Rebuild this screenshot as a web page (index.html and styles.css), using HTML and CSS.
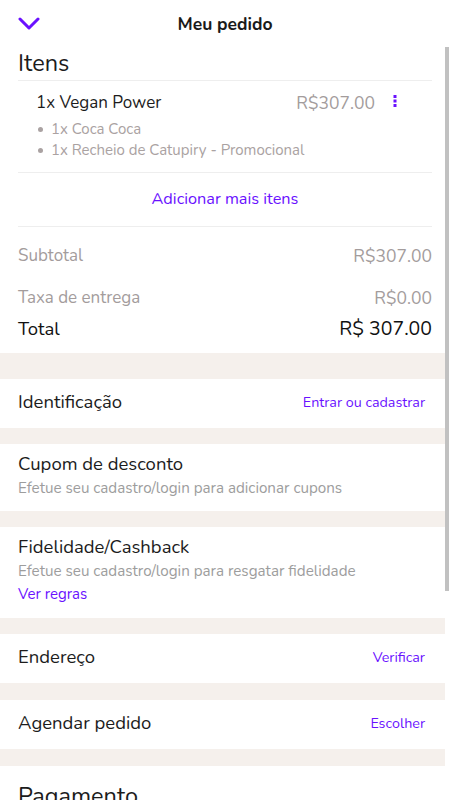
FILE: index.html
```html
<!DOCTYPE html>
<html lang="pt-BR">
<head>
    <meta charset="UTF-8">
    <meta name="viewport" content="width=device-width, initial-scale=1.0">
    <title>Meu pedido</title>
    <link rel="stylesheet" href="styles.css">
</head>
<body>
    <header class="topbar">
        <button class="back" aria-label="Fechar">
            <svg width="22" height="14" viewBox="0 0 22 14">
                <path d="M2 2 L11 11 L20 2" fill="none" stroke="#6a11ff" stroke-width="3" stroke-linecap="round" stroke-linejoin="round"/>
            </svg>
        </button>
        <h1>Meu pedido</h1>
        <span></span>
    </header>

    <div class="viewport">
        <main class="content">
            <section class="items">
                <h2 class="items-title">Itens</h2>
                <div class="item">
                    <div class="item-head">
                        <span class="item-name">1x Vegan Power</span>
                        <span class="item-price">R$307.00</span>
                        <button class="more" aria-label="Opções">
                            <svg width="4" height="12" viewBox="0 0 4 12">
                                <rect x="0.5" y="0" width="3" height="3" fill="#6a11ff"/>
                                <rect x="0.5" y="4.5" width="3" height="3" fill="#6a11ff"/>
                                <rect x="0.5" y="9" width="3" height="3" fill="#6a11ff"/>
                            </svg>
                        </button>
                    </div>
                    <ul class="extras">
                        <li>1x Coca Coca</li>
                        <li>1x Recheio de Catupiry - Promocional</li>
                    </ul>
                </div>
                <a class="add-more" href="#">Adicionar mais itens</a>
                <div class="totals">
                    <div class="total-row sub"><span>Subtotal</span><span>R$307.00</span></div>
                    <div class="total-row fee"><span>Taxa de entrega</span><span>R$0.00</span></div>
                    <div class="total-row grand"><span>Total</span><span>R$ 307.00</span></div>
                </div>
            </section>

            <div class="gap gap-lg"></div>

            <section class="row">
                <span class="row-title">Identificação</span>
                <a class="link" href="#">Entrar ou cadastrar</a>
            </section>

            <div class="gap"></div>

            <section class="block cupom">
                <div class="row-title">Cupom de desconto</div>
                <div class="hint">Efetue seu cadastro/login para adicionar cupons</div>
            </section>

            <div class="gap"></div>

            <section class="block fidelidade">
                <div class="row-title">Fidelidade/Cashback</div>
                <div class="hint">Efetue seu cadastro/login para resgatar fidelidade</div>
                <a class="link rules" href="#">Ver regras</a>
            </section>

            <div class="gap"></div>

            <section class="row">
                <span class="row-title">Endereço</span>
                <a class="link" href="#">Verificar</a>
            </section>

            <div class="gap gap-17"></div>

            <section class="row">
                <span class="row-title">Agendar pedido</span>
                <a class="link" href="#">Escolher</a>
            </section>

            <div class="gap gap-17"></div>

            <section class="payment">
                <h2 class="pay-title">Pagamento</h2>
            </section>
        </main>
        <div class="scrollbar">
            <div class="thumb"></div>
        </div>
    </div>
</body>
</html>
```

FILE: styles.css
```css
* {
    box-sizing: border-box;
}
body {
    margin: 0;
    font-family: 'Nunito', 'Lato', 'Noto Sans', sans-serif;
    color: #1c1c1c;
    background-color: #fff;
    height: 800px;
    overflow: hidden;
}
a {
    text-decoration: none;
}
button {
    background: none;
    border: none;
    padding: 0;
    cursor: pointer;
}

/* barra superior */
.topbar {
    height: 46px;
    display: grid;
    grid-template-columns: 60px 1fr 60px;
    align-items: center;
}
.back {
    display: flex;
    padding-left: 18px;
    padding-top: 2px;
}
.topbar h1 {
    margin: 0;
    text-align: center;
    font-size: 17.5px;
    font-weight: 700;
    color: #1a1a1a;
    padding-top: 2px;
}

/* area com barra de rolagem */
.viewport {
    display: flex;
    height: 754px;
    overflow: hidden;
}
.content {
    flex: 1;
    min-width: 0;
}
.scrollbar {
    width: 5px;
    padding: 1px 1px 0 0;
}
.thumb {
    height: 544px;
    background-color: #c1c1c1;
}

/* itens */
.items {
    padding: 0 13px 0 18px;
}
.items-title {
    margin: 0;
    font-size: 23.5px;
    font-weight: 400;
    line-height: 34px;
    border-bottom: 1px solid #eeeeee;
}
.item {
    padding: 10px 0 11px 18px;
    border-bottom: 1px solid #eeeeee;
}
.item-head {
    display: flex;
    align-items: center;
    line-height: 24px;
    font-size: 17px;
}
.item-name {
    flex: 1;
}
.item-price {
    font-size: 17.5px;
    color: #a39c9c;
}
.more {
    display: flex;
    margin: 0 35px 0 18px;
    padding-bottom: 4px;
}
.extras {
    list-style: none;
    margin: 4px 0 0;
    padding: 0;
    font-size: 15px;
    line-height: 21px;
    color: #aaa2a2;
}
.extras li {
    display: flex;
    align-items: center;
    gap: 8px;
}
.extras li::before {
    content: '';
    width: 5px;
    height: 5px;
    margin-left: 2px;
    border-radius: 50%;
    background-color: #aaa2a2;
}
.add-more {
    display: block;
    text-align: center;
    line-height: 53px;
    font-size: 16.3px;
    color: #6a11ff;
    border-bottom: 1px solid #eeeeee;
}
.totals {
    padding: 16px 0 11px;
}
.total-row {
    display: flex;
    justify-content: space-between;
    line-height: 26px;
    font-size: 17px;
    color: #a39c9c;
}
.total-row span:last-child {
    font-size: 17.5px;
}
.total-row.sub {
    margin-bottom: 16px;
}
.total-row.fee {
    margin-bottom: 5px;
}
.total-row.grand {
    font-size: 18.5px;
    color: #111;
}
.total-row.grand span:last-child {
    font-size: 19.5px;
}

/* faixas */
.gap {
    height: 16px;
    background-color: #f5f0ec;
}
.gap-lg {
    height: 26px;
}
.gap-17 {
    height: 17px;
}

/* linhas */
.row {
    height: 49px;
    display: flex;
    align-items: center;
    justify-content: space-between;
    padding: 0 20px 3px 18px;
}
.row:first-of-type {
    height: 48px;
    padding-bottom: 2px;
}
.row-title {
    font-size: 18.5px;
    line-height: 24px;
    color: #1c1c1c;
}
.link {
    font-size: 14.3px;
    color: #6a11ff;
}
.block {
    padding: 8px 20px 11px 18px;
}
.fidelidade {
    padding-bottom: 13px;
}
.hint {
    font-size: 15.2px;
    line-height: 24px;
    color: #9d9d9d;
}
.rules {
    display: block;
    font-size: 15px;
    line-height: 22px;
}

/* pagamento */
.payment {
    padding: 13px 20px 0 18px;
}
.pay-title {
    margin: 0;
    font-size: 23.5px;
    font-weight: 400;
    line-height: 34px;
}
```
